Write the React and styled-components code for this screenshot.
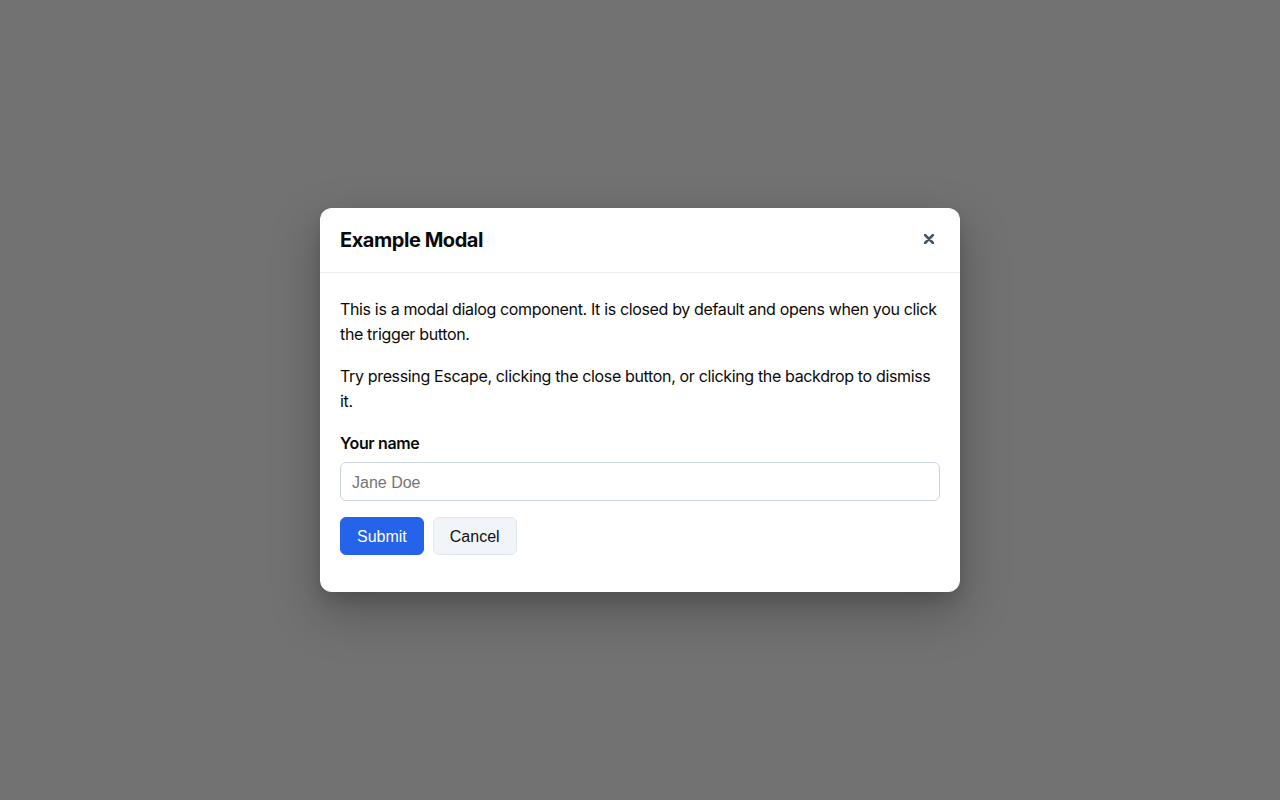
import React from "react";
import styled, { createGlobalStyle } from "styled-components";

const Global = createGlobalStyle`
  html, body { margin: 0; padding: 0; height: 100%; }
  body { font-family: Inter, "Noto Sans", sans-serif; color: #0b0b0f; }
  #root { height: 100%; }
`;

const Backdrop = styled.div`
  position: fixed;
  inset: 0;
  background: #727272;
  display: flex;
  align-items: center;
  justify-content: center;
`;

const Dialog = styled.div`
  width: 640px;
  background: #ffffff;
  border-radius: 12px;
  box-shadow: 0 20px 50px rgba(0, 0, 0, 0.25), 0 8px 16px rgba(0, 0, 0, 0.12);
  overflow: hidden;
`;

const Header = styled.div`
  display: flex;
  align-items: center;
  justify-content: space-between;
  height: 65px;
  padding: 0 20px;
  border-bottom: 1px solid #eceff3;
  box-sizing: border-box;
`;

const Title = styled.h2`
  margin: 0 0 1px;
  font-size: 20px;
  font-weight: 700;
  color: #0a0a0a;
  letter-spacing: -0.45px;
`;

const CloseButton = styled.button`
  width: 22px;
  height: 22px;
  padding: 0;
  border: 0;
  background: transparent;
  display: flex;
  align-items: center;
  justify-content: center;
  cursor: pointer;
  color: #475569;
  margin-top: -3px;
`;

const Body = styled.div`
  padding: 24px 20px 37px;
`;

const Paragraph = styled.p`
  margin: 0 0 17px;
  font-size: 16px;
  line-height: 25px;
  letter-spacing: -0.35px;
  color: #0a0a0a;
`;

const Label = styled.label`
  display: block;
  font-size: 16px;
  font-weight: 600;
  line-height: 24px;
  letter-spacing: -0.35px;
  margin-bottom: 7px;
  color: #0a0a0a;
`;

const Input = styled.input`
  display: block;
  width: 100%;
  box-sizing: border-box;
  height: 39px;
  padding: 2px 11px 0;
  border: 1px solid #cbd5e1;
  border-radius: 6px;
  font-family: "Liberation Sans", Arial, sans-serif;
  font-size: 16px;
  color: #111;
  outline: none;
  &::placeholder { color: #757575; }
`;

const Actions = styled.div`
  display: flex;
  gap: 9px;
  margin-top: 16px;
`;

const Button = styled.button`
  height: 38px;
  padding: 2px 16px 0;
  border-radius: 6px;
  font-family: "Liberation Sans", Arial, sans-serif;
  font-size: 16px;
  cursor: pointer;
  border: 1px solid ${(p) => (p.$primary ? "#2563eb" : "#e2e8f0")};
  background: ${(p) => (p.$primary ? "#2563eb" : "#f1f5f9")};
  color: ${(p) => (p.$primary ? "#ffffff" : "#111111")};
`;

export default function App() {
  return (
    <>
      <Global />
      <Backdrop>
        <Dialog role="dialog" aria-modal="true">
          <Header>
            <Title>Example Modal</Title>
            <CloseButton aria-label="Close">
              <svg width="10" height="10" viewBox="0 0 10 10" fill="none">
                <path d="M1 1L9 9M9 1L1 9" stroke="currentColor" strokeWidth="2.5" strokeLinecap="round" />
              </svg>
            </CloseButton>
          </Header>
          <Body>
            <Paragraph>
              This is a modal dialog component. It is closed by default and opens when you click the trigger button.
            </Paragraph>
            <Paragraph>
              Try pressing Escape, clicking the close button, or clicking the backdrop to dismiss it.
            </Paragraph>
            <Label htmlFor="name">Your name</Label>
            <Input id="name" placeholder="Jane Doe" />
            <Actions>
              <Button $primary>Submit</Button>
              <Button>Cancel</Button>
            </Actions>
          </Body>
        </Dialog>
      </Backdrop>
    </>
  );
}
